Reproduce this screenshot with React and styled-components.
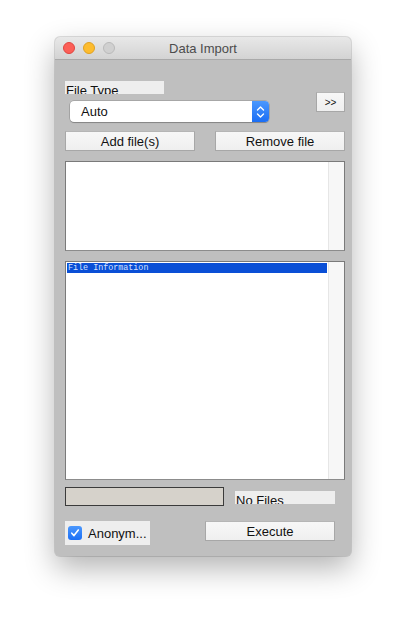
import React from 'react';
import styled, { createGlobalStyle } from 'styled-components';

const GlobalStyle = createGlobalStyle`
  html, body {
    margin: 0;
    padding: 0;
    background: #ffffff;
  }
  body {
    font-family: "Liberation Sans", Arial, sans-serif;
  }
`;

const Page = styled.div`
  width: 407px;
  height: 630px;
  padding: 37px 0 0 55px;
  box-sizing: border-box;
`;

const Window = styled.div`
  width: 296px;
  height: 519px;
  background: #bfbfbf;
  border-radius: 5px;
  box-shadow: 0 0 0 1px rgba(0, 0, 0, 0.12), 0 12px 30px rgba(0, 0, 0, 0.3);
  overflow: hidden;
  display: flex;
  flex-direction: column;
`;

const TitleBar = styled.div`
  height: 22px;
  flex: none;
  background: linear-gradient(#e8e8e8, #d3d3d3);
  border-bottom: 1px solid #a9a9a9;
  display: flex;
  align-items: center;
  justify-content: center;
  position: relative;
  font-size: 13px;
  color: #4c4c4c;
`;

const Lights = styled.div`
  position: absolute;
  left: 8px;
  top: 5px;
  display: flex;
  gap: 8px;
`;

const Light = styled.span`
  width: 12px;
  height: 12px;
  border-radius: 50%;
  box-sizing: border-box;
  background: ${p => p.$c};
  border: 1px solid ${p => p.$b};
`;

const Body = styled.div`
  flex: 1;
  padding: 0 6px 0 10px;
  display: flex;
  flex-direction: column;
`;

const TopRow = styled.div`
  display: flex;
  justify-content: space-between;
  align-items: flex-start;
`;

const LeftCol = styled.div`
  display: flex;
  flex-direction: column;
  padding-top: 21px;
`;

const Label = styled.div`
  width: ${p => p.$w}px;
  height: 13px;
  background: #eeeeee;
  font-size: 13px;
  line-height: 13px;
  padding: 3px 0 0 1px;
  box-sizing: border-box;
  overflow: hidden;
  white-space: nowrap;
  color: #111;
`;

const Combo = styled.div`
  margin: 7px 0 0 5px;
  width: 199px;
  height: 21px;
  background: #ffffff;
  border-radius: 4px;
  box-shadow: 0 0 0 0.5px rgba(0, 0, 0, 0.25), 0 1px 1px rgba(0, 0, 0, 0.2);
  display: flex;
  align-items: center;
  justify-content: space-between;
  overflow: hidden;
  font-size: 13px;
  color: #111;
`;

const ComboText = styled.span`
  padding-left: 11px;
`;

const Stepper = styled.div`
  width: 17px;
  height: 21px;
  background: linear-gradient(#4b98fd, #1b6ef5);
  display: flex;
  align-items: center;
  justify-content: center;
`;

const Button = styled.div`
  width: ${p => p.$w}px;
  height: 20px;
  box-sizing: border-box;
  background: linear-gradient(#f7f7f7, #efefef);
  border: 1px solid #a7a7a7;
  border-top-color: #b5b5b5;
  display: flex;
  align-items: center;
  justify-content: center;
  font-size: ${p => p.$fs || 13}px;
  color: #111;
`;

const MoreButton = styled(Button)`
  margin-top: 32px;
`;

const ButtonRow = styled.div`
  margin-top: 9px;
  display: flex;
  justify-content: space-between;
`;

const List = styled.div`
  margin-top: ${p => p.$mt}px;
  height: ${p => p.$h}px;
  background: #ffffff;
  border: 1px solid #7a7a7a;
  border-bottom-color: #8c8c8c;
  box-sizing: border-box;
  display: flex;
`;

const ListBody = styled.div`
  flex: 1;
  padding: 1px;
`;

const ScrollTrack = styled.div`
  width: 15px;
  background: #f7f7f7;
  border-left: 1px solid #e6e6e6;
`;

const SelectedRow = styled.div`
  height: 10px;
  background: #0a4fd6;
  color: #d8e2ff;
  font-family: "Liberation Mono", "Courier New", monospace;
  font-size: 8.4px;
  line-height: 10px;
  padding-left: 1px;
  white-space: nowrap;
`;

const StatusRow = styled.div`
  margin-top: 7px;
  display: flex;
  align-items: flex-start;
  gap: 11px;
`;

const Progress = styled.div`
  width: 159px;
  height: 19px;
  box-sizing: border-box;
  background: #d6d2cb;
  border: 1px solid #3b3b3b;
`;

const StatusLabel = styled(Label)`
  margin-top: 4px;
  padding-left: 1px;
`;

const BottomRow = styled.div`
  margin-top: 15px;
  display: flex;
  justify-content: space-between;
  align-items: flex-start;
  padding-right: 10px;
`;

const CheckPanel = styled.div`
  width: 85px;
  height: 24px;
  background: #eeeeee;
  display: flex;
  align-items: center;
  gap: 6px;
  padding-left: 3px;
  box-sizing: border-box;
  font-size: 13px;
  color: #111;
`;

const CheckBox = styled.span`
  width: 14px;
  height: 14px;
  border-radius: 3px;
  background: linear-gradient(#4a97fd, #1c6ff5);
  display: flex;
  align-items: center;
  justify-content: center;
`;

export default function App() {
  return (
    <Page>
      <GlobalStyle />
      <Window>
        <TitleBar>
          <Lights>
            <Light $c="#fc5f57" $b="#de4640" />
            <Light $c="#fdbc2e" $b="#dea123" />
            <Light $c="#d0d0d0" $b="#b9b9b9" />
          </Lights>
          Data Import
        </TitleBar>
        <Body>
          <TopRow>
            <LeftCol>
              <Label $w={99}>File Type</Label>
              <Combo>
                <ComboText>Auto</ComboText>
                <Stepper>
                  <svg width="9" height="14" viewBox="0 0 9 14">
                    <path d="M1.5 5 L4.5 2 L7.5 5 M1.5 9 L4.5 12 L7.5 9" fill="none" stroke="#fff" strokeWidth="1.4" strokeLinecap="round" strokeLinejoin="round" />
                  </svg>
                </Stepper>
              </Combo>
            </LeftCol>
            <MoreButton $w={29} $fs={10}>&gt;&gt;</MoreButton>
          </TopRow>
          <ButtonRow>
            <Button $w={130}>Add file(s)</Button>
            <Button $w={130}>Remove file</Button>
          </ButtonRow>
          <List $mt={10} $h={90}>
            <ListBody />
            <ScrollTrack />
          </List>
          <List $mt={10} $h={219}>
            <ListBody>
              <SelectedRow>File Information</SelectedRow>
            </ListBody>
            <ScrollTrack />
          </List>
          <StatusRow>
            <Progress />
            <StatusLabel $w={100}>No Files</StatusLabel>
          </StatusRow>
          <BottomRow>
            <CheckPanel>
              <CheckBox>
                <svg width="10" height="10" viewBox="0 0 10 10">
                  <path d="M1.8 5.2 L4 7.6 L8.3 2" fill="none" stroke="#fff" strokeWidth="1.6" strokeLinecap="round" strokeLinejoin="round" />
                </svg>
              </CheckBox>
              Anonym...
            </CheckPanel>
            <Button $w={130}>Execute</Button>
          </BottomRow>
        </Body>
      </Window>
    </Page>
  );
}
